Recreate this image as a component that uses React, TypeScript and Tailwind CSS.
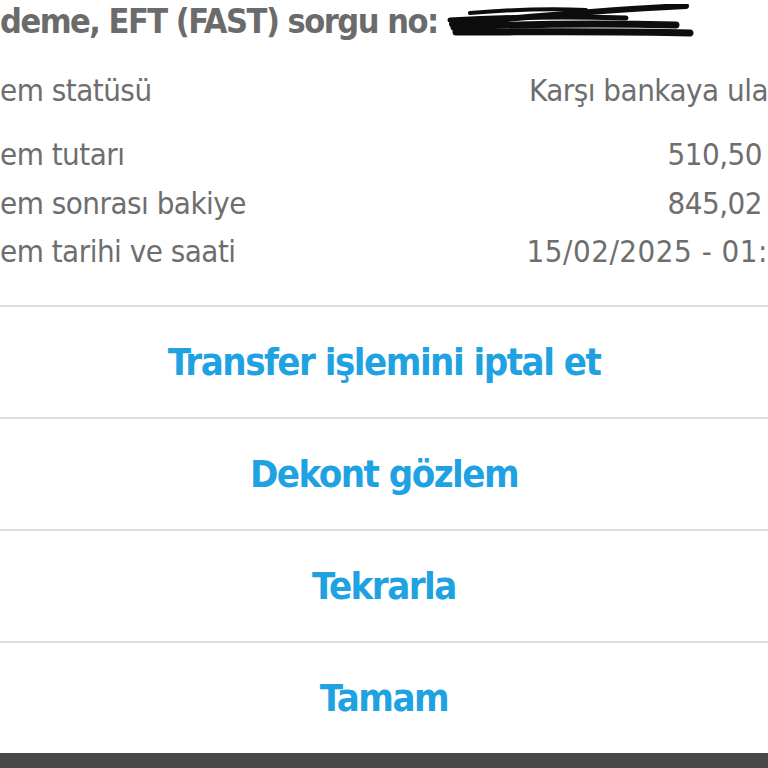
import React from "react";

const font = { fontFamily: '"DejaVu Sans Condensed", "Liberation Sans Narrow", "Roboto", sans-serif' };

const rows = [
  { label: "em statüsü", value: "Karşı bankaya ula", vcls: "", cls: "h-[50px] mt-[23px]" },
  { label: "em tutarı", value: "510,50", vcls: "pr-[6px]", cls: "h-[50px] mt-[14px]" },
  { label: "em sonrası bakiye", value: "845,02", vcls: "pr-[6px]", cls: "h-[48px]" },
  { label: "em tarihi ve saati", value: "15/02/2025 - 01:", vcls: "tracking-[0.5px]", cls: "h-[48px]" },
];

const actions = ["Transfer işlemini iptal et", "Dekont gözlem", "Tekrarla", "Tamam"];

/** scribbled-out reference number */
const Scribble = () => (
  <svg width="250" height="34" viewBox="0 0 250 34" className="ml-[8px] shrink-0">
    <g stroke="#0d0d0d" strokeLinecap="round" fill="none">
      <path d="M6 20 C70 14 150 6 240 2" strokeWidth="6" />
      <path d="M4 16 C60 13 120 12 180 14" strokeWidth="5" />
      <path d="M8 23 C80 20 150 19 230 21" strokeWidth="7" />
      <path d="M10 28 C90 28 170 27 244 29" strokeWidth="7" />
      <path d="M24 9 C60 6 100 4 140 6" strokeWidth="4" />
    </g>
  </svg>
);

export default function App() {
  return (
    <div className="w-[768px] h-[768px] overflow-hidden bg-white flex flex-col" style={font}>
      <div className="h-[42px] shrink-0 flex items-center whitespace-nowrap">
        <span className="text-[34px] font-bold text-[#6b6b6b] tracking-[-1.5px] leading-none">
          deme, EFT (FAST) sorgu no:
        </span>
        <Scribble />
      </div>

      {rows.map((r) => (
        <div
          key={r.label}
          className={`${r.cls} shrink-0 flex items-center justify-between whitespace-nowrap text-[31px] text-[#6e6e6e] leading-none tracking-[-0.5px]`}
        >
          <span>{r.label}</span>
          <span className={r.vcls}>{r.value}</span>
        </div>
      ))}

      <div className="mt-[30px] shrink-0 flex flex-col">
        {actions.map((a) => (
          <div
            key={a}
            className="h-[112px] border-t-2 border-[#dcdcdc] flex items-center justify-center text-[38px] font-bold text-[#1ea2e1] tracking-[-1.5px]"
          >
            {a}
          </div>
        ))}
      </div>
      <div className="flex-1 bg-[#484848]" />
    </div>
  );
}
